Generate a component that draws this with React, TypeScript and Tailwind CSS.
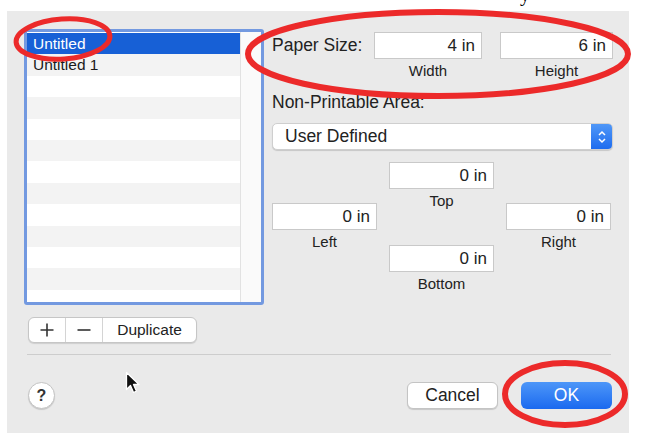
import React from "react";

const font = { fontFamily: '"Liberation Sans", Arial, sans-serif' };

function Field({ value, w }: { value: string; w: string }) {
  return (
    <div
      className={`${w} h-[27px] bg-white border border-[#c9c9c9] flex items-center justify-end pr-[6px] text-[17px] text-[#222]`}
    >
      {value}
    </div>
  );
}

export default function App() {
  const rows = Array.from({ length: 13 });
  return (
    <div className="w-[648px] h-[443px] bg-white relative overflow-hidden" style={font}>
      <div className="h-[11px] overflow-hidden">
        <div className="pl-[520px] -mt-[17px] text-[20px] leading-[22px] text-black" style={{ fontFamily: '"Liberation Serif", serif' }}>
          y
        </div>
      </div>
      <div className="ml-[7px] w-[622px] h-[422px] bg-[#eaeaea] flex flex-col">
        <div className="flex pt-[18px] pl-[17px]">
          {/* left column */}
          <div className="flex flex-col w-[240px]">
            <div className="h-[276px] border-[3px] border-[#7399e0] rounded-[3px] bg-white flex overflow-hidden">
              <div className="flex-1 flex flex-col pt-[1px]">
                {rows.map((_, i) => (
                  <div
                    key={i}
                    className={`h-[21.4px] shrink-0 flex items-center pl-[6px] text-[15.5px] ${
                      i === 0 ? "bg-[#1760d6] text-white" : i % 2 === 1 ? "bg-[#f3f3f3] text-[#1a1a1a]" : "bg-white text-[#1a1a1a]"
                    }`}
                  >
                    {i === 0 ? "Untitled" : i === 1 ? "Untitled 1" : ""}
                  </div>
                ))}
              </div>
              <div className="w-[21px] border-l border-[#e2e2e2] bg-[#fafafa]" />
            </div>
            <div className="mt-[12px] ml-[4px] flex h-[26px] w-[169px] bg-white border border-[#c6c6c6] rounded-[6px] shadow-[0_1px_1px_rgba(0,0,0,0.12)] text-[15.5px] text-[#222]">
              <div className="w-[37px] flex items-center justify-center border-r border-[#d4d4d4]">
                <svg width="16" height="16" viewBox="0 0 16 16">
                  <path d="M8 1.5v13M1.5 8h13" stroke="#333" strokeWidth="1.6" />
                </svg>
              </div>
              <div className="w-[37px] flex items-center justify-center border-r border-[#d4d4d4]">
                <svg width="16" height="16" viewBox="0 0 16 16">
                  <path d="M1.5 8h13" stroke="#333" strokeWidth="1.6" />
                </svg>
              </div>
              <div className="flex-1 flex items-center justify-center">Duplicate</div>
            </div>
          </div>

          {/* right column */}
          <div className="ml-[8px] w-[341px] flex flex-col text-[#222]">
            <div className="mt-[3px] flex items-center">
              <div className="w-[102px] text-[17.5px]">Paper Size:</div>
              <Field value="4 in" w="w-[108px]" />
              <div className="w-[18px]" />
              <Field value="6 in" w="w-[113px]" />
            </div>
            <div className="flex h-[20px] mt-[1px] text-[15px]">
              <div className="w-[102px]" />
              <div className="w-[108px] text-center">Width</div>
              <div className="w-[18px]" />
              <div className="w-[113px] text-center">Height</div>
            </div>
            <div className="mt-[12px] h-[20px] leading-[20px] text-[17.5px]">Non-Printable Area:</div>
            <div className="mt-[11px] h-[27px] bg-white rounded-[5px] border border-[#cfcfcf] shadow-[0_1px_1px_rgba(0,0,0,0.15)] flex overflow-hidden">
              <div className="flex-1 flex items-center pl-[12px] text-[17.5px]">User Defined</div>
              <div className="w-[21px] bg-gradient-to-b from-[#4f97f7] to-[#1d6cef] flex items-center justify-center">
                <svg width="10" height="16" viewBox="0 0 10 16">
                  <path d="M2 6l3-3 3 3M2 10l3 3 3-3" stroke="white" strokeWidth="1.5" fill="none" />
                </svg>
              </div>
            </div>
            <div className="flex mt-[12px]">
              <div className="w-[105px] flex flex-col items-center mt-[41px]">
                <Field value="0 in" w="w-[105px]" />
                <div className="mt-[3px] text-[15px] leading-[18px]">Left</div>
              </div>
              <div className="w-[12px]" />
              <div className="w-[105px] flex flex-col items-center">
                <Field value="0 in" w="w-[105px]" />
                <div className="mt-[3px] text-[15px] leading-[18px]">Top</div>
                <div className="mt-[35px]">
                  <Field value="0 in" w="w-[105px]" />
                </div>
                <div className="mt-[3px] text-[15px] leading-[18px]">Bottom</div>
              </div>
              <div className="w-[12px]" />
              <div className="w-[105px] flex flex-col items-center mt-[41px]">
                <Field value="0 in" w="w-[105px]" />
                <div className="mt-[3px] text-[15px] leading-[18px]">Right</div>
              </div>
            </div>
          </div>
        </div>

        <div className="mt-[11px] ml-[20px] w-[584px] h-px bg-[#cdcdcd]" />

        <div className="flex items-center mt-[27px] pl-[21px] pr-[17px]">
          <div className="w-[27px] h-[27px] rounded-full bg-white border border-[#c4c4c4] shadow-[0_1px_1px_rgba(0,0,0,0.15)] flex items-center justify-center text-[16px] font-bold text-[#333]">
            ?
          </div>
          <div className="flex-1" />
          <div className="w-[91px] h-[27px] bg-white rounded-[6px] border border-[#c4c4c4] shadow-[0_1px_1px_rgba(0,0,0,0.15)] flex items-center justify-center text-[17.5px] text-[#222]">
            Cancel
          </div>
          <div className="w-[23px]" />
          <div className="w-[91px] h-[27px] rounded-[6px] bg-gradient-to-b from-[#4d96f8] to-[#1a69ef] flex items-center justify-center text-[17.5px] text-white">
            OK
          </div>
        </div>
      </div>

      {/* mouse cursor */}
      <svg className="absolute left-[125px] top-[371px]" width="16" height="24" viewBox="0 0 16 24">
        <path d="M1.5 1.5v17l4-4 3 7 3-1.3-3-6.7h5.5z" fill="#111" stroke="white" strokeWidth="1.3" strokeLinejoin="round" />
      </svg>

      {/* red annotation ellipses */}
      <svg className="absolute inset-0 pointer-events-none" width="648" height="443" viewBox="0 0 648 443">
        <ellipse cx="63" cy="39" rx="47" ry="20" fill="none" stroke="#ec2a2a" strokeWidth="5" transform="rotate(-4 63 39)" />
        <ellipse cx="438" cy="54" rx="190" ry="42" fill="none" stroke="#ec2a2a" strokeWidth="6" />
        <ellipse cx="565" cy="394" rx="60" ry="31" fill="none" stroke="#ec2a2a" strokeWidth="6" />
      </svg>
    </div>
  );
}
